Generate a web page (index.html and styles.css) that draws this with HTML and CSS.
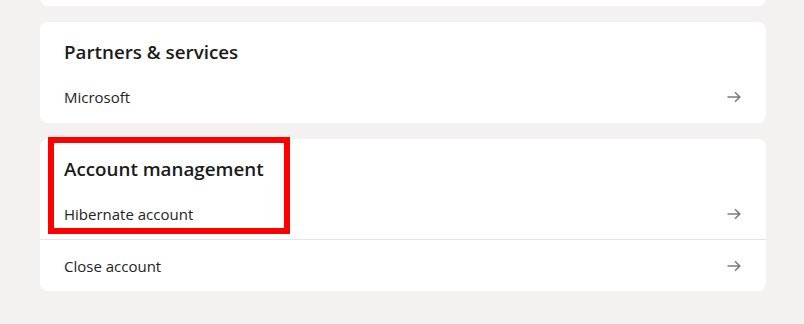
FILE: index.html
```html
<!DOCTYPE html>
<html lang="en">
<head>
<meta charset="utf-8">
<title>Account settings</title>
<link rel="stylesheet" href="styles.css">
</head>
<body>
<main class="page">
  <section class="card card-top"></section>

  <section class="card">
    <h2 class="card-title">Partners &amp; services</h2>
    <a class="row" href="#">
      <span class="row-label">Microsoft</span>
      <svg class="arrow" viewBox="0 0 16 16" aria-hidden="true"><path d="M1.5 8h12.5M9 3.2 13.8 8 9 12.8" /></svg>
    </a>
  </section>

  <section class="card card-account">
    <div class="highlight" aria-hidden="true"></div>
    <h2 class="card-title">Account management</h2>
    <a class="row" href="#">
      <span class="row-label">Hibernate account</span>
      <svg class="arrow" viewBox="0 0 16 16" aria-hidden="true"><path d="M1.5 8h12.5M9 3.2 13.8 8 9 12.8" /></svg>
    </a>
    <a class="row row-divided" href="#">
      <span class="row-label">Close account</span>
      <svg class="arrow" viewBox="0 0 16 16" aria-hidden="true"><path d="M1.5 8h12.5M9 3.2 13.8 8 9 12.8" /></svg>
    </a>
  </section>
</main>
</body>
</html>
```

FILE: styles.css
```css
html, body {
  margin: 0;
  padding: 0;
  background: #f3f2f1;
}

body {
  font-family: "Open Sans", "Noto Sans", Arial, sans-serif;
  color: #1f1f1f;
}

.page {
  display: flex;
  flex-direction: column;
  gap: 16px;
  width: 726px;
  padding-left: 40px;
}

.card {
  position: relative;
  background: #ffffff;
  border-radius: 8px;
  display: flex;
  flex-direction: column;
}

.card-top {
  height: 40px;
  margin-top: -34px;
}

.card-title {
  margin: 0;
  padding: 16px 24px 5px;
  font-size: 18.8px;
  line-height: 28px;
  font-weight: 600;
  color: #1b1b1b;
}

.row {
  display: flex;
  align-items: center;
  justify-content: space-between;
  height: 52px;
  padding: 0 24px;
  color: #242424;
  text-decoration: none;
  box-sizing: border-box;
}

.row:first-of-type {
  height: 51px;
}

.row-divided {
  border-top: 1px solid #e6e6e6;
}

.card > .row:only-of-type {
  height: 52px;
}

.row-label {
  font-size: 15px;
  line-height: 20px;
}

.arrow {
  width: 16px;
  height: 16px;
  fill: none;
  stroke: #7c7c7c;
  stroke-width: 1.6;
}

.highlight {
  position: absolute;
  left: 8px;
  top: -2px;
  width: 242px;
  height: 97px;
  box-sizing: border-box;
  border: 6px solid #ff0000;
  pointer-events: none;
}
```
